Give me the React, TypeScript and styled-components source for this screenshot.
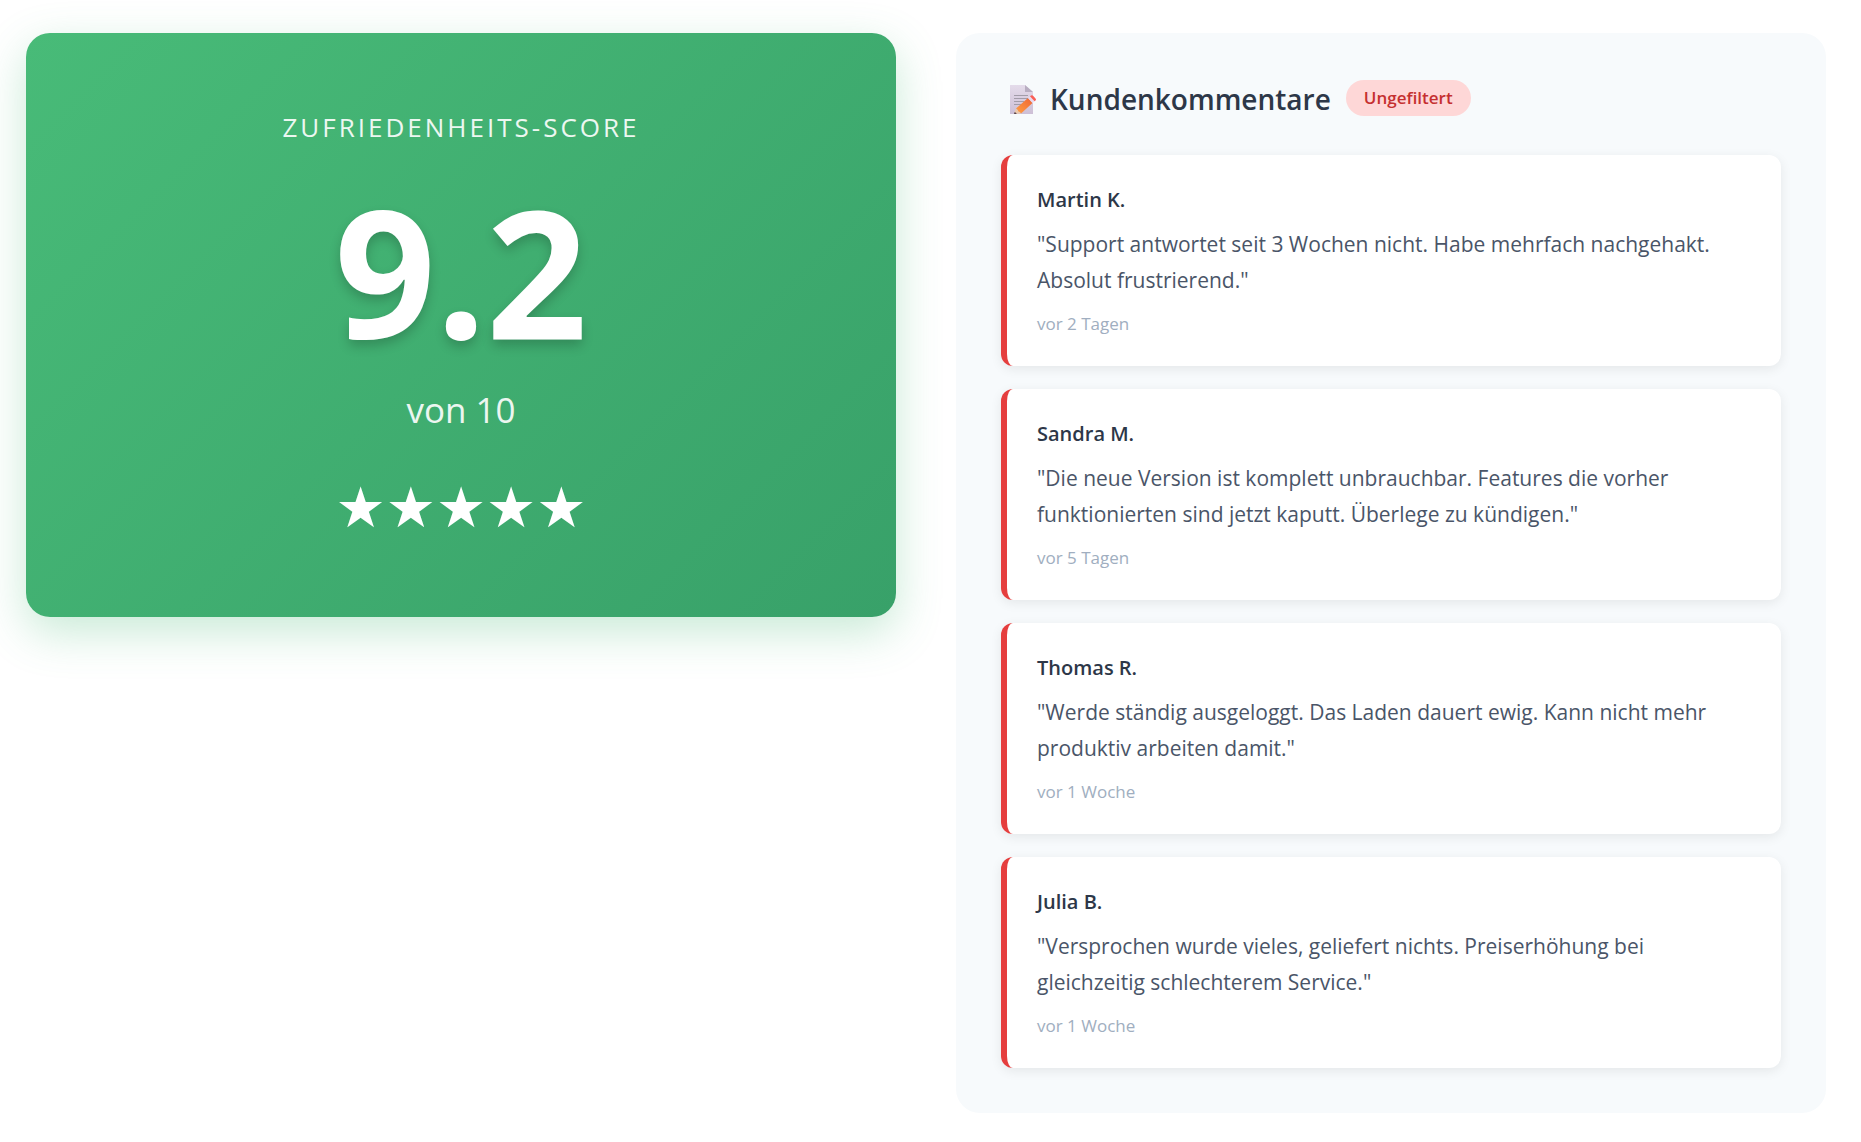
import React from "react";
import styled, { createGlobalStyle } from "styled-components";

const GlobalStyle = createGlobalStyle`
  *, *::before, *::after { box-sizing: border-box; }
  body {
    margin: 0;
    background: #ffffff;
    color: #2d3748;
    font-family: "Segoe UI", "Open Sans", "Noto Sans", sans-serif;
  }
`;

const Page = styled.main`
  display: grid;
  grid-template-columns: repeat(2, minmax(0, 1fr));
  align-items: start;
  gap: 60px;
  padding: 33px 35px 30px 26px;
`;

const ScoreCard = styled.section`
  display: flex;
  flex-direction: column;
  align-items: center;
  padding: 76px 60px 70px;
  border-radius: 24px;
  background: linear-gradient(135deg, #48bb78 0%, #38a169 100%);
  box-shadow: 0 15px 45px rgba(72, 187, 120, 0.3);
  color: #ffffff;
  text-align: center;
`;

const ScoreLabel = styled.h2`
  margin: 0 0 36px;
  font-size: 26px;
  font-weight: 400;
  line-height: 36px;
  letter-spacing: 3px;
  text-transform: uppercase;
  opacity: 0.9;
`;

const ScoreValue = styled.div`
  margin-bottom: 25px;
  font-size: 177px;
  font-weight: 700;
  line-height: 180px;
  text-shadow: 0 6px 12px rgba(0, 0, 0, 0.2);
`;

const ScoreScale = styled.div`
  margin-bottom: 34px;
  font-size: 35px;
  line-height: 48px;
  opacity: 0.9;
`;

const Stars = styled.div`
  font-family: "DejaVu Sans", sans-serif;
  font-size: 56px;
  line-height: 79px;
`;

const CommentPanel = styled.section`
  padding: 45px;
  border-radius: 24px;
  background: #f7fafc;
`;

const PanelHeader = styled.header`
  display: flex;
  align-items: center;
  gap: 15px;
  margin-bottom: 37px;
  padding-left: 9px;
`;

const PanelTitle = styled.h2`
  display: flex;
  align-items: center;
  gap: 13px;
  margin: 0;
  padding-top: 2px;
  font-size: 28px;
  font-weight: 600;
  line-height: 38px;
`;

const Badge = styled.span`
  padding: 0 18px;
  border-radius: 18px;
  background: #fed7d7;
  color: #c53030;
  font-size: 17px;
  font-weight: 600;
  line-height: 36px;
`;

const CommentList = styled.div`
  display: flex;
  flex-direction: column;
  gap: 23px;
`;

const CommentCard = styled.article`
  padding: 30px;
  border-left: 6px solid #e53e3e;
  border-radius: 12px;
  background: #ffffff;
  box-shadow: 0 3px 12px rgba(0, 0, 0, 0.08);
`;

const Author = styled.h3`
  margin: 0 0 11px;
  font-size: 20px;
  font-weight: 600;
  line-height: 30px;
`;

const Quote = styled.p`
  margin: 0 0 14px;
  color: #4a5568;
  font-size: 21px;
  line-height: 36px;
`;

const Age = styled.div`
  color: #a0aec0;
  font-size: 17px;
  line-height: 24px;
`;

const MemoIcon = () => (
  <svg width="27" height="30" viewBox="0 0 27 30" aria-hidden="true">
    <defs>
      <linearGradient id="paper" x1="0" y1="0" x2="0" y2="1">
        <stop offset="0" stopColor="#e4dbea" />
        <stop offset="1" stopColor="#cdbfd6" />
      </linearGradient>
      <linearGradient id="pencil" x1="0" y1="1" x2="1" y2="0">
        <stop offset="0" stopColor="#ffa043" />
        <stop offset="1" stopColor="#ef6536" />
      </linearGradient>
    </defs>
    <path d="M0 1H15L23 8V30H0Z" fill="url(#paper)" />
    <path d="M15 1V8H23Z" fill="#b8adc1" />
    <path d="M4 11.5H18M4 14.5H18M4 17.5H14M4 20.5H11" stroke="#a29ca9" strokeWidth="1.2" />
    <path d="M4 30L6 24.5L11 29.5Z" fill="#ecc9ad" />
    <path d="M4 30L4.8 27.9L6.9 29.8Z" fill="#45333d" />
    <path d="M6 24.5L18 14L22.5 19L11 29.5Q10 27.5 8.5 27.5Q8 25.5 6 24.5Z" fill="url(#pencil)" />
    <path d="M18 14L20 12.2L24.6 17.2L22.5 19Z" fill="#e9d9ee" />
    <path d="M20 12.2L21 11.5Q22.3 10.7 23.3 12L25.7 14.8Q26.5 15.8 25.5 16.5L24.6 17.2Z" fill="#fa5e55" />
  </svg>
);

const comments = [
  {
    author: "Martin K.",
    text: "Support antwortet seit 3 Wochen nicht. Habe mehrfach nachgehakt. Absolut frustrierend.",
    age: "vor 2 Tagen",
  },
  {
    author: "Sandra M.",
    text: "Die neue Version ist komplett unbrauchbar. Features die vorher funktionierten sind jetzt kaputt. Überlege zu kündigen.",
    age: "vor 5 Tagen",
  },
  {
    author: "Thomas R.",
    text: "Werde ständig ausgeloggt. Das Laden dauert ewig. Kann nicht mehr produktiv arbeiten damit.",
    age: "vor 1 Woche",
  },
  {
    author: "Julia B.",
    text: "Versprochen wurde vieles, geliefert nichts. Preiserhöhung bei gleichzeitig schlechterem Service.",
    age: "vor 1 Woche",
  },
];

export default function App() {
  return (
    <>
      <GlobalStyle />
      <Page>
        <ScoreCard>
          <ScoreLabel>Zufriedenheits-Score</ScoreLabel>
          <ScoreValue>9.2</ScoreValue>
          <ScoreScale>von 10</ScoreScale>
          <Stars>★★★★★</Stars>
        </ScoreCard>
        <CommentPanel>
          <PanelHeader>
            <PanelTitle>
              <MemoIcon />
              Kundenkommentare
            </PanelTitle>
            <Badge>Ungefiltert</Badge>
          </PanelHeader>
          <CommentList>
            {comments.map((comment) => (
              <CommentCard key={comment.author}>
                <Author>{comment.author}</Author>
                <Quote>{`"${comment.text}"`}</Quote>
                <Age>{comment.age}</Age>
              </CommentCard>
            ))}
          </CommentList>
        </CommentPanel>
      </Page>
    </>
  );
}
